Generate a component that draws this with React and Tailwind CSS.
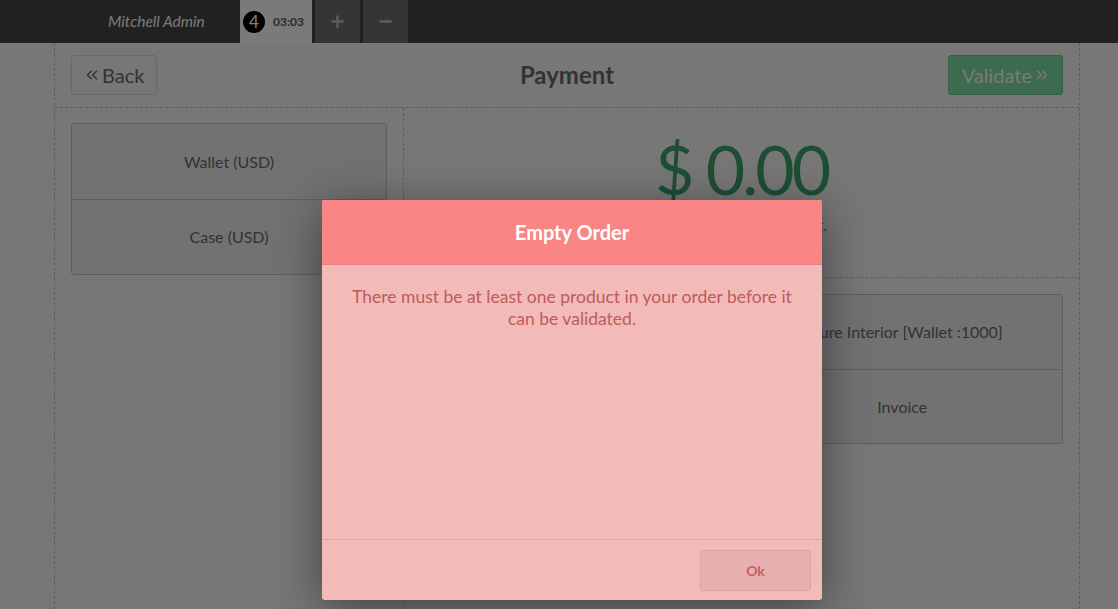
import { ChevronsLeft, ChevronsRight, Plus, Minus } from "lucide-react";

const paymentMethods = ["Wallet (USD)", "Case (USD)"];

function Header() {
  return (
    <div className="flex h-[43px] bg-[#424242]">
      <div className="flex w-[240px] items-center pl-[108px]">
        <span className="text-[15.5px] italic text-[#f2f2f2]">Mitchell Admin</span>
      </div>
      <div className="flex w-[72px] items-center gap-[8px] bg-[#f4f4f4] pl-[3px]">
        <span className="flex h-[22px] w-[22px] items-center justify-center rounded-full bg-black text-[17px] leading-none text-white">
          4
        </span>
        <span className="text-[12px] font-bold text-[#555]">03:03</span>
      </div>
      <div className="ml-[3px] flex w-[45px] items-center justify-center bg-[#6a6a6a] text-[#b0b0b0]">
        <Plus size={17} strokeWidth={4} />
      </div>
      <div className="ml-[3px] flex w-[45px] items-center justify-center bg-[#6a6a6a] text-[#b0b0b0]">
        <Minus size={17} strokeWidth={4} />
      </div>
    </div>
  );
}

function PaymentScreen() {
  return (
    <div className="ml-[54px] flex h-[566px] w-[1026px] flex-col border-x border-dashed border-[#bcbcbc]">
      <div className="grid h-[65px] grid-cols-[1fr_auto_1fr] items-center border-b border-dashed border-[#bcbcbc] px-4">
        <div>
          <button className="flex h-[40px] items-center gap-[1px] rounded-[3px] border border-[#d2d2d2] pl-[11px] pr-[12px] text-[20px] text-[#666]">
            <ChevronsLeft size={18} strokeWidth={2} />
            Back
          </button>
        </div>
        <h1 className="text-[24px] font-bold text-[#666]">Payment</h1>
        <div className="flex justify-end">
          <button className="flex h-[40px] items-center gap-[1px] rounded-[3px] border border-[#6cbf90] bg-[#78d6a0] pl-[13px] pr-[11px] text-[20px] text-[#f4f4f4]">
            Validate
            <ChevronsRight size={18} strokeWidth={2} />
          </button>
        </div>
      </div>

      <div className="flex flex-1">
        <div className="w-[349px] border-r border-dashed border-[#bcbcbc] px-4 pt-[15px]">
          <div className="overflow-hidden rounded-[3px] border border-[#bdbdbd] bg-[#e4e4e4]">
            {paymentMethods.map((name, i) => (
              <div
                key={name}
                className={`flex h-[75px] items-center justify-center text-[16px] text-[#666] ${i > 0 ? "border-t border-[#bdbdbd]" : ""}`}
              >
                {name}
              </div>
            ))}
          </div>
        </div>

        <div className="flex flex-1 flex-col">
          <div className="flex h-[170px] flex-col items-center border-b border-dashed border-[#bcbcbc] pt-[17px]">
            <div className="text-[68px] leading-[88px] tracking-[-3px] text-[#3c9e68] [text-shadow:0_0_2px_#ffffff]">
              $ 0.00
            </div>
            <div className="text-[16px] text-[#666]">Please select a payment.</div>
          </div>
          <div className="grid grid-cols-2 px-4 pt-[16px]">
            <div />
            <div className="overflow-hidden rounded-[3px] border border-[#bdbdbd] bg-[#e4e4e4] text-[16px] text-[#666]">
              <div className="flex h-[74px] items-center justify-center">
                Azure Interior [Wallet :1000]
              </div>
              <div className="flex h-[74px] items-center justify-center border-t border-[#bdbdbd]">
                Invoice
              </div>
            </div>
          </div>
        </div>
      </div>
    </div>
  );
}

function Popup() {
  return (
    <div className="absolute left-[322px] top-[200px] flex h-[400px] w-[500px] flex-col overflow-hidden rounded-[3px] bg-[#f3baba] shadow-[0_10px_50px_rgba(0,0,0,0.45)]">
      <div className="flex h-[65px] items-center justify-center border-b border-[#ee7d7d] bg-[#f98585] text-[20px] font-bold text-white">
        Empty Order
      </div>
      <div className="flex-1 px-5 pt-[21px] text-center text-[17.5px] leading-[22px] text-[#bd5c5c]">
        There must be at least one product in your order before it can be validated.
      </div>
      <div className="flex h-[61px] justify-end border-t border-[#e7a6a6] pr-[11px] pt-[10px]">
        <button className="h-[41px] w-[111px] rounded-[3px] border border-[#dca3a3] bg-[#e8b1b1] text-[14px] font-bold text-[#c0605f]">
          Ok
        </button>
      </div>
    </div>
  );
}

export default function App() {
  return (
    <div className="relative h-[609px] w-full overflow-hidden bg-[#eeeeee] font-['Lato',sans-serif]">
      <Header />
      <PaymentScreen />
      <div className="absolute inset-0 bg-black/50" />
      <Popup />
    </div>
  );
}
